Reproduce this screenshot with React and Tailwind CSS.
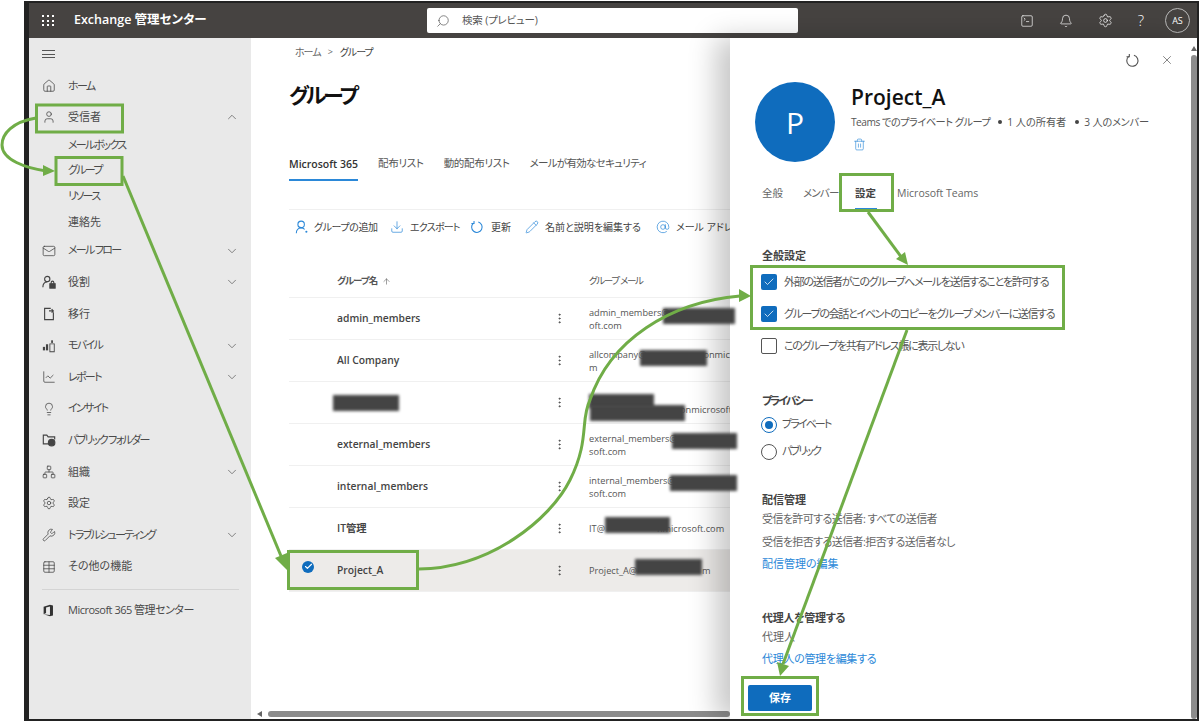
import {
  Home, User, ChevronUp, ChevronDown, Mail, ChartLine, Lightbulb, Network, Settings, Wrench, Table,
  Search, Bell, X, Trash2, Download, Pencil, AtSign, Check, ArrowUp, EllipsisVertical, SquareTerminal,
} from "lucide-react";

function RoleIcon(props) {
  return (
    <svg viewBox="0 0 16 16" fill="none" stroke="currentColor" {...props}>
      <circle cx="6" cy="4.5" r="3" />
      <path d="M1 14c0-4 2-6 5-6" />
      <rect x="9" y="10" width="6" height="5" fill="currentColor" />
      <path d="M10.5 10V8.5a1.5 1.5 0 0 1 3 0V10" />
    </svg>
  );
}

function MigrateIcon(props) {
  return (
    <svg viewBox="0 0 16 16" fill="none" stroke="currentColor" {...props}>
      <path d="M10 1.5H3v13h10V6" />
      <path d="M8 4.5h5M11 2.5l2 2-2 2" />
    </svg>
  );
}

function MobileIcon(props) {
  return (
    <svg viewBox="0 0 16 16" fill="currentColor" {...props}>
      <rect x="1" y="9" width="2.5" height="4" />
      <rect x="4.5" y="6" width="2.5" height="7" />
      <path d="M8.5 5h6v10h-6zM9.5 6v8h4V6z" fillRule="evenodd" />
      <rect x="10.5" y="1.5" width="2" height="3" />
    </svg>
  );
}

function FolderIcon(props) {
  return (
    <svg viewBox="0 0 16 16" fill="none" stroke="currentColor" {...props}>
      <path d="M7 12.5H1.5v-10h4l1.5 2h7.5v3" />
      <circle cx="11" cy="11" r="3.7" fill="currentColor" />
    </svg>
  );
}

function OfficeIcon(props) {
  return (
    <svg viewBox="0 0 16 16" fill="currentColor" {...props}>
      <path d="M2 3.4 9.8.8l3.7 1.1v12.2l-3.7 1.1L2 12.6l7.8 1V3.2L5 4.3v6.9l-3 1.4z" />
    </svg>
  );
}

function RefreshIcon(props) {
  return (
    <svg viewBox="0 0 16 16" fill="none" stroke="currentColor" {...props}>
      <path d="M9.5 2.4A6 6 0 1 1 4 3.6" />
      <path d="M4.6 1v3H1.6" />
    </svg>
  );
}

function AddUserIcon(props) {
  return (
    <svg viewBox="0 0 16 16" fill="none" stroke="currentColor" {...props}>
      <circle cx="7" cy="5" r="3.7" />
      <path d="M1.5 15c0-3.6 2.4-6 5.5-6 1.6 0 3 .6 4 1.7" />
      <circle cx="13" cy="13.5" r="1.2" fill="currentColor" stroke="none" />
    </svg>
  );
}

const navTop = [
  { label: "ホーム", icon: Home, kana: true },
  { label: "受信者", icon: User, chevron: "up" },
];

const subItems = [
  { label: "メールボックス", kana: true },
  { label: "グループ", kana: true },
  { label: "リソース", kana: true },
  { label: "連絡先" },
];

const navBottom = [
  { label: "メール フロー", icon: Mail, chevron: "down", kana: true },
  { label: "役割", icon: RoleIcon, chevron: "down" },
  { label: "移行", icon: MigrateIcon },
  { label: "モバイル", icon: MobileIcon, chevron: "down", kana: true },
  { label: "レポート", icon: ChartLine, chevron: "down", kana: true },
  { label: "インサイト", icon: Lightbulb, kana: true },
  { label: "パブリック フォルダー", icon: FolderIcon, kana: true },
  { label: "組織", icon: Network, chevron: "down" },
  { label: "設定", icon: Settings },
  { label: "トラブルシューティング", icon: Wrench, chevron: "down", kana: true },
  { label: "その他の機能", icon: Table },
];

const groups = [
  { name: "admin_members", email: [{ text: "admin_members@" }, { text: "oft.com" }] },
  { name: "All Company", email: [{ text: "allcompany@", gap: "w-[57px]", tail: "onmic" }, { text: "m" }] },
  { name: "", email: [{ text: "" }, { text: "", gap: "w-[91px]", tail: "onmicrosoft" }] },
  { name: "external_members", email: [{ text: "external_members@" }, { text: "soft.com" }] },
  { name: "internal_members", email: [{ text: "internal_members@" }, { text: "soft.com" }] },
  { name: "IT管理", email: [{ text: "IT@", gap: "w-[52px]", tail: "nmicrosoft.com" }] },
  { name: "Project_A", email: [{ text: "Project_A@", gap: "w-[65px]", tail: "m" }], selected: true },
];

// 黒塗り部分
const redactions = [
  "left-[333px] top-[395px] w-[66px] h-[16px]",
  "left-[663px] top-[308px] w-[72px] h-[16px]",
  "left-[640px] top-[350px] w-[67px] h-[16px]",
  "left-[589px] top-[394px] w-[65px] h-[14px]",
  "left-[590px] top-[405px] w-[95px] h-[16px]",
  "left-[672px] top-[433px] w-[65px] h-[16px]",
  "left-[670px] top-[475px] w-[67px] h-[16px]",
  "left-[605px] top-[517px] w-[65px] h-[16px]",
  "left-[635px] top-[559px] w-[67px] h-[16px]",
];

function NavItem({ item }) {
  const Icon = item.icon;
  return (
    <div className="h-[31.6px] flex items-center pl-[13px] pr-[12px]">
      <Icon className="w-[14px] h-[14px] text-[#444] shrink-0" strokeWidth={1.3} />
      <span className={"ml-[12px] flex-1 whitespace-nowrap " + (item.kana ? "tracking-[-1.7px]" : "")}>{item.label}</span>
      {item.chevron === "up" && <ChevronUp className="w-[14px] h-[14px] text-[#555]" strokeWidth={1.2} />}
      {item.chevron === "down" && <ChevronDown className="w-[14px] h-[14px] text-[#555]" strokeWidth={1.2} />}
    </div>
  );
}

function Sidebar() {
  return (
    <aside className="w-[222px] shrink-0 bg-[#e9e9e9] text-[11px] text-[#4a4a4a]">
      <div className="h-[32px] flex items-center pl-[13px]">
        <div className="w-[13px] flex flex-col gap-[2.5px]">
          <div className="h-px bg-[#555]" />
          <div className="h-px bg-[#555]" />
          <div className="h-px bg-[#555]" />
        </div>
      </div>
      {navTop.map((item) => <NavItem key={item.label} item={item} />)}
      <div className="-mt-[1px]">
        {subItems.map((s) => (
          <div key={s.label} className={"h-[25.7px] flex items-center pl-[39px] " + (s.kana ? "tracking-[-1.7px]" : "")}>{s.label}</div>
        ))}
      </div>
      {navBottom.map((item) => <NavItem key={item.label} item={item} />)}
      <div className="h-px bg-[#d4d4d4] mt-[7px] ml-[13px] w-[197px]" />
      <div className="h-[32px] mt-[4px] flex items-center pl-[13px]">
        <OfficeIcon className="w-[13px] h-[13px] text-[#333]" />
        <span className="ml-[13px] whitespace-nowrap tracking-[-0.5px]">Microsoft 365 管理センター</span>
      </div>
    </aside>
  );
}

function ToolButton({ icon: Icon, label, className }) {
  return (
    <div className={"flex items-center whitespace-nowrap " + className}>
      <Icon className="w-[14px] h-[14px] text-[#2b88d8] shrink-0" strokeWidth={1.2} />
      {label}
    </div>
  );
}

function GroupList() {
  return (
    <div className="w-[441px] mt-[22px]">
      <div className="h-[32px] flex items-center border-b border-[#f0f0f0] text-[9.5px] font-semibold text-[#555]">
        <div className="w-[48px] shrink-0" />
        <div className="w-[214px] shrink-0 flex items-center tracking-[-1px]">
          グループ名 <ArrowUp className="w-[9px] h-[9px] ml-[5px]" strokeWidth={1.5} />
        </div>
        <div className="w-[38px] shrink-0" />
        <div className="font-normal tracking-[-1.3px]">グループ メール</div>
      </div>
      {groups.map((g, i) => (
        <div key={i} className={"h-[42px] flex items-center border-b border-[#f0f0f0] " + (g.selected ? "bg-[#edebe9]" : "")}>
          <div className="w-[48px] shrink-0 pl-[13px]">
            {g.selected && (
              <div className="w-[12px] h-[12px] mb-[8px] rounded-full bg-[#0f6cbd] flex items-center justify-center">
                <Check className="w-[9px] h-[9px] text-white" strokeWidth={3} />
              </div>
            )}
          </div>
          <div className="w-[214px] shrink-0 text-[10.3px] font-semibold text-[#444]">{g.name}</div>
          <div className="w-[38px] shrink-0 pl-[2px]">
            <EllipsisVertical className="w-[13px] h-[13px] text-[#444]" strokeWidth={1.6} />
          </div>
          <div className="shrink-0 text-[9.2px] leading-[13px] text-[#555] whitespace-nowrap">
            {g.email.map((line, j) => (
              <div key={j} className="h-[13px] flex">
                {line.text}
                {line.gap && <span className={"inline-block " + line.gap} />}
                {line.tail}
              </div>
            ))}
          </div>
        </div>
      ))}
    </div>
  );
}

function MainArea() {
  return (
    <main className="w-[479px] shrink-0 flex flex-col overflow-hidden bg-white">
      <div className="pl-[38px] flex-1">
        <div className="pt-[6px] h-[22px] flex items-center text-[10px] text-[#666] pl-[6px]">
          <span className="tracking-[-1px]">ホーム</span>
          <span className="mx-[7px] text-[9px]">&gt;</span>
          <span className="text-[#444] tracking-[-1px]">グループ</span>
        </div>
        <h1 className="mt-[21px] h-[28px] leading-[28px] text-[21px] font-semibold text-[#111] tracking-[-3px]">グループ</h1>
        <div className="mt-[47px] flex text-[10.5px] text-[#555]">
          <div className="h-[25px] pt-px border-b-2 border-[#2b88d8] font-semibold text-[#333] w-[69px] whitespace-nowrap">Microsoft 365</div>
          <div className="ml-[20px] whitespace-nowrap tracking-[-0.3px]">配布リスト</div>
          <div className="ml-[20px] whitespace-nowrap tracking-[-0.3px]">動的配布リスト</div>
          <div className="ml-[20px] whitespace-nowrap tracking-[-0.7px]">メールが有効なセキュリティ</div>
        </div>
        <div className="mt-[28px] h-px w-[441px] bg-[#f0f0f0]" />
        <div className="h-[34px] flex items-center text-[10px] text-[#444] pl-[6px] whitespace-nowrap">
          <ToolButton icon={AddUserIcon} label={<span className="ml-[5px] w-[64px] tracking-[-0.4px]">グループの追加</span>} className="mr-[12px]" />
          <ToolButton icon={Download} label={<span className="ml-[6px] w-[49px] tracking-[-0.8px]">エクスポート</span>} className="mr-[11px]" />
          <ToolButton icon={RefreshIcon} label={<span className="ml-[7px] w-[21px]">更新</span>} className="mr-[13px]" />
          <ToolButton icon={Pencil} label={<span className="ml-[6px] w-[100px]">名前と説明を編集する</span>} className="mr-[11px]" />
          <ToolButton icon={AtSign} label={<span className="ml-[6px]">メール アドレス</span>} />
        </div>
        <GroupList />
      </div>
      <div className="h-[9px] mb-[1px] flex items-center pl-[6px]">
        <div className="w-0 h-0 border-y-[3px] border-y-transparent border-r-[5px] border-r-[#666]" />
        <div className="ml-[6px] flex-1 h-[6px] rounded-full bg-[#8c8c8c]" />
      </div>
    </main>
  );
}

function CheckRow({ checked, label }) {
  return (
    <div className="h-[32px] flex items-center -ml-[1px]">
      {checked ? (
        <div className="w-[16px] h-[16px] rounded-[2px] bg-[#0f6cbd] flex items-center justify-center shrink-0">
          <Check className="w-[12px] h-[12px] text-white" strokeWidth={1.5} />
        </div>
      ) : (
        <div className="w-[16px] h-[16px] rounded-[2px] border border-[#555] shrink-0" />
      )}
      <span className="ml-[7px] text-[#555] whitespace-nowrap tracking-[-1.3px]">{label}</span>
    </div>
  );
}

function Radio({ checked, label }) {
  return (
    <div className="h-[27px] flex items-center -ml-[1px]">
      {checked ? (
        <div className="w-[16px] h-[16px] rounded-full border border-[#0f6cbd] flex items-center justify-center shrink-0">
          <div className="w-[8px] h-[8px] rounded-full bg-[#0f6cbd]" />
        </div>
      ) : (
        <div className="w-[16px] h-[16px] rounded-full border border-[#555] shrink-0" />
      )}
      <span className="ml-[5px] text-[#555] tracking-[-1.9px]">{label}</span>
    </div>
  );
}

function DetailPanel() {
  return (
    <section className="relative z-10 flex-1 flex bg-white shadow-[-14px_0_26px_rgba(0,0,0,0.22)]">
      <div className="w-[460px] text-[11px] text-[#666]">
        <div className="h-[44px] flex items-center justify-end gap-[20px] pr-[16px]">
          <RefreshIcon className="w-[15px] h-[15px] text-[#555]" strokeWidth={1.2} />
          <X className="w-[14px] h-[14px] text-[#555]" strokeWidth={1.2} />
        </div>
        <div className="flex pl-[25px]">
          <div className="w-[80px] h-[80px] rounded-full bg-[#0f6cbd] flex items-center justify-center text-white text-[30px] font-medium shrink-0">P</div>
          <div className="ml-[16px]">
            <div className="h-[31px] leading-[31px] text-[21px] font-semibold text-[#111]">Project_A</div>
            <div className="h-[16px] mt-[1px] leading-[16px] text-[10.2px] text-[#555] whitespace-nowrap flex items-center">
              <span className="tracking-[-0.5px]">Teams でのプライベート グループ</span>
              <span className="w-[4px] h-[4px] rounded-full bg-[#444] ml-[8px] mr-[5px]" />
              <span>1 人の所有者</span>
              <span className="w-[4px] h-[4px] rounded-full bg-[#444] ml-[9px] mr-[5px]" />
              <span className="tracking-[-0.2px]">3 人のメンバー</span>
            </div>
            <Trash2 className="w-[13px] h-[13px] text-[#2b88d8] mt-[8px] ml-[2px]" strokeWidth={1.2} />
          </div>
        </div>
        <div className="mt-[21px] pl-[32px] h-[27px] flex text-[#666] text-[10.5px]">
          <div className="h-[20px] leading-[20px] w-[41px]">全般</div>
          <div className="h-[20px] leading-[20px] w-[52px] tracking-[-0.8px]">メンバー</div>
          <div className="w-[42px]">
            <div className="h-[27px] w-[22px] leading-[20px] font-semibold text-[#444] border-b-2 border-[#2b88d8]">設定</div>
          </div>
          <div className="h-[20px] leading-[20px] whitespace-nowrap">Microsoft Teams</div>
        </div>
        <div className="pl-[32px]">
          <div className="mt-[38px] h-[16px] leading-[16px] font-semibold text-[#444]">全般設定</div>
          <div className="mt-[2px]">
            <CheckRow checked label="外部の送信者がこのグループへメールを送信することを許可する" />
            <CheckRow checked label="グループの会話とイベントのコピーをグループ メンバーに送信する" />
            <CheckRow label="このグループを共有アドレス帳に表示しない" />
          </div>
          <div className="mt-[31px] h-[16px] leading-[16px] font-semibold text-[#444] tracking-[-2px]">プライバシー</div>
          <div className="mt-[2px]">
            <Radio checked label="プライベート" />
            <Radio label="パブリック" />
          </div>
          <div className="mt-[27px] h-[16px] leading-[16px] font-semibold text-[#444]">配信管理</div>
          <div className="h-[22px] leading-[22px] tracking-[-0.6px]">受信を許可する送信者: すべての送信者</div>
          <div className="h-[23px] leading-[23px] tracking-[-0.6px]">受信を拒否する送信者:拒否する送信者なし</div>
          <div className="h-[21px] leading-[21px] text-[#2b88d8]">配信管理の編集</div>
          <div className="mt-[36px] h-[16px] leading-[16px] font-semibold text-[#444] tracking-[-0.3px]">代理人を管理する</div>
          <div className="h-[22px] leading-[22px]">代理人</div>
          <div className="h-[22px] leading-[22px] text-[#2b88d8] tracking-[-0.3px]">代理人の管理を編集する</div>
          <button className="mt-[15px] -ml-[14px] w-[64px] h-[26px] rounded-[2px] bg-[#0f6cbd] text-white font-semibold">保存</button>
        </div>
      </div>
      <div className="w-[7px] flex flex-col items-center pt-[8px]">
        <div className="w-0 h-0 border-x-[3px] border-x-transparent border-b-[5px] border-b-[#666]" />
        <div className="mt-[4px] w-[6px] flex-1 rounded-full bg-[#8c8c8c]" />
      </div>
    </section>
  );
}

function Annotations() {
  const green = "#70ad47";
  return (
    <svg className="absolute inset-0 z-30 pointer-events-none" width="1200" height="722" viewBox="0 0 1200 722" fill="none" stroke={green} strokeWidth="3">
      <rect x="36.5" y="105" width="86" height="27" />
      <rect x="56" y="157.5" width="66" height="27" />
      <rect x="288.5" y="551.5" width="129" height="37" />
      <rect x="840.5" y="174.5" width="52" height="36" />
      <rect x="751.5" y="266.5" width="312" height="62" />
      <rect x="742.5" y="677.5" width="75" height="37" />
      <path d="M36 118C12 122 2 134 2 145C2 160 26 168 46 171" />
      <path d="M123 176L281 556" />
      <path d="M419 569C490 568 550 520 570 480C590 440 580 420 590 400C610 340 670 302 740 296" />
      <path d="M868 212L902 258" />
      <path d="M907 330L783 664" />
      <g fill={green} stroke="none">
        <polygon points="55,171 43,165 43,176" />
        <polygon points="288,571 275,558 287,553" />
        <polygon points="751,296 739,289 739,302" />
        <polygon points="908,265 896,259 905,252" />
        <polygon points="780,676 777,662 789,666" />
      </g>
    </svg>
  );
}

export default function App() {
  return (
    <div className="relative w-[1200px] h-[722px] bg-white overflow-hidden [font-family:'Open_Sans','Noto_Sans_CJK_JP',sans-serif] [font-feature-settings:'palt']">
      <div className="ml-[24px] mt-[1px] w-[1175px] h-[720px] border-y-2 border-r-2 border-l-[5px] border-[#222] flex flex-col overflow-hidden">
        <header className="h-[35px] shrink-0 bg-[#464341] flex items-center text-white">
          <div className="ml-[13px] w-[13px] grid grid-cols-3 gap-[2.5px]">
            {[0, 1, 2, 3, 4, 5, 6, 7, 8].map((d) => <div key={d} className="w-[2px] h-[2px] bg-white" />)}
          </div>
          <div className="ml-[19px] w-[353px] text-[12.5px] font-semibold whitespace-nowrap">Exchange 管理センター</div>
          <div className="w-[371px] h-[25px] bg-white rounded-[2px] flex items-center pl-[9px] text-[10.5px] text-[#555]">
            <Search className="w-[14px] h-[14px] -scale-x-100" strokeWidth={1.2} />
            <span className="ml-[12px] tracking-[-0.2px]">検索 (プレビュー)</span>
          </div>
          <div className="ml-[222px] w-[124px] flex items-center justify-between">
            <SquareTerminal className="w-[14px] h-[14px]" strokeWidth={1.2} />
            <Bell className="w-[14px] h-[14px]" strokeWidth={1.2} />
            <Settings className="w-[15px] h-[15px]" strokeWidth={1.2} />
            <span className="text-[15px] font-light leading-none">?</span>
          </div>
          <div className="ml-[21px] w-[25px] h-[25px] rounded-full border border-[#bbb] flex items-center justify-center text-[9px]">AS</div>
        </header>
        <div className="flex-1 flex min-h-0">
          <Sidebar />
          <MainArea />
          <DetailPanel />
        </div>
      </div>
      {redactions.map((r) => (
        <div key={r} className={"absolute z-20 bg-[#444] blur-[1.5px] " + r} />
      ))}
      <Annotations />
    </div>
  );
}
